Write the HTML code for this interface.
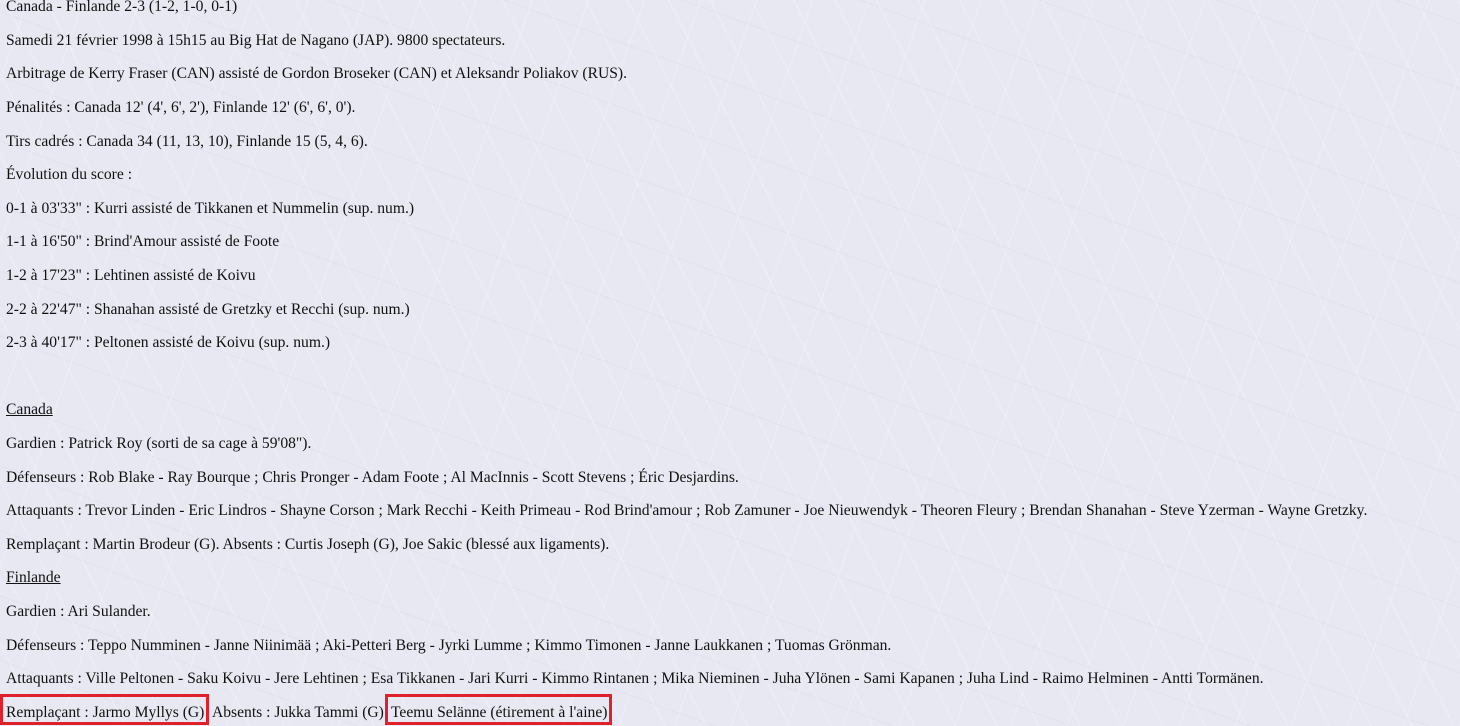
<!DOCTYPE html>
<html><head><meta charset="utf-8"><style>
html,body{margin:0;padding:0;width:1460px;height:726px;overflow:hidden;}
body{background:#e8e8f3;font-family:"Liberation Serif","Times New Roman",serif;font-size:15.6px;color:#111;position:relative;
background-image:repeating-linear-gradient(63deg,rgba(255,255,255,0.25) 0 1px,transparent 1px 37px),repeating-linear-gradient(-71deg,rgba(255,255,255,0.22) 0 1px,transparent 1px 53px),repeating-linear-gradient(20deg,rgba(200,200,220,0.18) 0 1px,transparent 1px 61px);}
.l{position:absolute;left:6px;height:34px;line-height:34px;white-space:nowrap;}
u{text-decoration:underline;}
.box{position:absolute;border:3px solid #e0202a;box-sizing:border-box;}
</style></head><body>
<div class="l" style="top:-10px">Canada - Finlande 2-3 (1-2, 1-0, 0-1)</div>
<div class="l" style="top:23.8px">Samedi 21 février 1998 à 15h15 au Big Hat de Nagano (JAP). 9800 spectateurs.</div>
<div class="l" style="top:57.4px">Arbitrage de Kerry Fraser (CAN) assisté de Gordon Broseker (CAN) et Aleksandr Poliakov (RUS).</div>
<div class="l" style="top:91px">Pénalités : Canada 12' (4', 6', 2'), Finlande 12' (6', 6', 0').</div>
<div class="l" style="top:124.6px">Tirs cadrés : Canada 34 (11, 13, 10), Finlande 15 (5, 4, 6).</div>
<div class="l" style="top:158.2px">Évolution du score :</div>
<div class="l" style="top:191.8px">0-1 à 03'33" : Kurri assisté de Tikkanen et Nummelin (sup. num.)</div>
<div class="l" style="top:225.4px">1-1 à 16'50" : Brind'Amour assisté de Foote</div>
<div class="l" style="top:259px">1-2 à 17'23" : Lehtinen assisté de Koivu</div>
<div class="l" style="top:292.6px">2-2 à 22'47" : Shanahan assisté de Gretzky et Recchi (sup. num.)</div>
<div class="l" style="top:326.2px">2-3 à 40'17" : Peltonen assisté de Koivu (sup. num.)</div>
<div class="l" style="top:393.4px"><u>Canada</u></div>
<div class="l" style="top:427px">Gardien : Patrick Roy (sorti de sa cage à 59'08").</div>
<div class="l" style="top:460.6px">Défenseurs : Rob Blake - Ray Bourque ; Chris Pronger - Adam Foote ; Al MacInnis - Scott Stevens ; Éric Desjardins.</div>
<div class="l" style="top:494.2px">Attaquants : Trevor Linden - Eric Lindros - Shayne Corson ; Mark Recchi - Keith Primeau - Rod Brind'amour ; Rob Zamuner - Joe Nieuwendyk - Theoren Fleury ; Brendan Shanahan - Steve Yzerman - Wayne Gretzky.</div>
<div class="l" style="top:527.8px">Remplaçant : Martin Brodeur (G). Absents : Curtis Joseph (G), Joe Sakic (blessé aux ligaments).</div>
<div class="l" style="top:561.4px"><u>Finlande</u></div>
<div class="l" style="top:595px">Gardien : Ari Sulander.</div>
<div class="l" style="top:628.6px">Défenseurs : Teppo Numminen - Janne Niinimää ; Aki-Petteri Berg - Jyrki Lumme ; Kimmo Timonen - Janne Laukkanen ; Tuomas Grönman.</div>
<div class="l" style="top:662.2px">Attaquants : Ville Peltonen - Saku Koivu - Jere Lehtinen ; Esa Tikkanen - Jari Kurri - Kimmo Rintanen ; Mika Nieminen - Juha Ylönen - Sami Kapanen ; Juha Lind - Raimo Helminen - Antti Tormänen.</div>
<div class="l" style="top:695.8px">Remplaçant : Jarmo Myllys (G)</div>
<div class="l" style="top:695.8px;left:212px">Absents : Jukka Tammi (G)</div>
<div class="l" style="top:695.8px;left:391px">Teemu Selänne (étirement à l'aine)</div>
<div class="box" style="left:0;top:694px;width:209px;height:31px"></div>
<div class="box" style="left:385px;top:694px;width:227px;height:31px"></div>
</body></html>
